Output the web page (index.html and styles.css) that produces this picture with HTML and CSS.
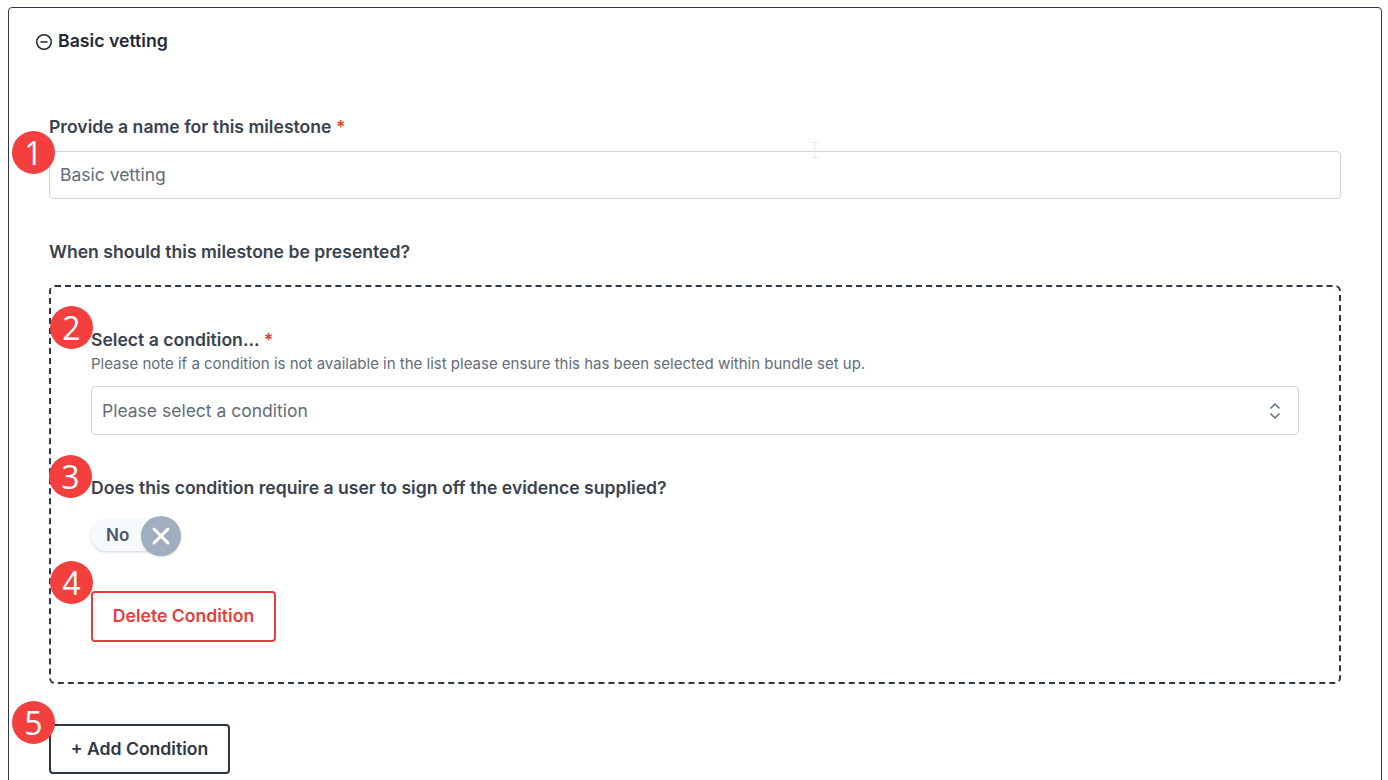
FILE: index.html
```html
<!DOCTYPE html>
<html lang="en">
<head>
    <meta charset="UTF-8">
    <title>Milestone</title>
    <link rel="stylesheet" href="styles.css">
</head>
<body>
    <div class="card">
        <div class="card-header">
            <svg class="toggle-icon" width="18" height="18" viewBox="0 0 18 18" fill="none" stroke="#1f2937" stroke-width="1.5" stroke-linecap="round">
                <circle cx="9" cy="9" r="7.25"/>
                <path d="M6 9h6"/>
            </svg>
            <span>Basic vetting</span>
        </div>

        <section class="field name-field">
            <span class="badge badge-1">1</span>
            <label class="label">Provide a name for this milestone <span class="req">*</span></label>
            <div class="input">Basic vetting</div>
            <svg class="ibeam" width="8" height="16" viewBox="0 0 8 16" fill="none" stroke="#e5e7eb" stroke-width="1">
                <path d="M1 .5h6M1 15.5h6M4 .5v15"/>
            </svg>
        </section>

        <h3 class="label when-label">When should this milestone be presented?</h3>

        <div class="condition-box">
            <section class="field">
                <span class="badge badge-2">2</span>
                <label class="label">Select a condition... <span class="req">*</span></label>
                <p class="help">Please note if a condition is not available in the list please ensure this has been selected within bundle set up.</p>
                <div class="input select">
                    <span>Please select a condition</span>
                    <svg width="12" height="18" viewBox="0 0 12 18" fill="none" stroke="#64748b" stroke-width="1.7" stroke-linecap="round" stroke-linejoin="round">
                        <path d="M2 6l4-4 4 4M2 12l4 4 4-4"/>
                    </svg>
                </div>
            </section>

            <section class="field signoff">
                <span class="badge badge-3">3</span>
                <label class="label">Does this condition require a user to sign off the evidence supplied?</label>
                <div class="switch">
                    <span class="switch-text">No</span>
                    <span class="switch-knob">
                        <svg width="20" height="20" viewBox="0 0 20 20" fill="none" stroke="#fff" stroke-width="3" stroke-linecap="round">
                            <path d="M3 3l14 14M17 3L3 17"/>
                        </svg>
                    </span>
                </div>
            </section>

            <section class="field delete-row">
                <span class="badge badge-4">4</span>
                <button class="btn btn-danger">Delete Condition</button>
            </section>
        </div>

        <section class="field add-row">
            <span class="badge badge-5">5</span>
            <button class="btn btn-dark">+ Add Condition</button>
        </section>
    </div>
</body>
</html>
```

FILE: styles.css
```css
html, body {
    height: 780px;
    overflow: hidden;
}

body {
    margin: 0;
    padding: 7px 6px 0 8px;
    background: #fff;
    font-family: Inter, "Noto Sans", sans-serif;
    color: #374151;
}

/* Card */
.card {
    border: 1px solid #2d3748;
    border-radius: 4px;
    padding: 0 40px 40px;
    height: 820px;
}

.card-header {
    display: flex;
    align-items: center;
    gap: 5px;
    margin-left: -14px;
    padding-top: 20px;
    height: 24px;
    font-size: 17.7px;
    font-weight: 600;
    color: #1f2937;
}

.toggle-icon {
    margin-top: 3px;
}

/* Form */
.field {
    position: relative;
}

.name-field {
    margin-top: 63px;
}

.label {
    display: block;
    margin: 0;
    font-size: 17.6px;
    line-height: 24px;
    font-weight: 600;
    color: #3a4250;
}

.req {
    color: #e8431f;
}

.input {
    display: flex;
    align-items: center;
    justify-content: space-between;
    box-sizing: border-box;
    height: 48px;
    margin-top: 12px;
    padding: 0 10px 2px;
    border: 1px solid #cbd5e0;
    border-radius: 4px;
    font-size: 17.5px;
    color: #626d7c;
}

.ibeam {
    position: absolute;
    left: 762px;
    top: 27px;
}

.when-label {
    margin-top: 41px;
}

.condition-box {
    box-sizing: border-box;
    height: 399px;
    margin-top: 21px;
    padding: 41px 40px 0;
    border: 2px dashed #2d3748;
    border-radius: 6px;
}

.help {
    margin: 2px 0 0;
    font-size: 15px;
    line-height: 20px;
    color: #626d7c;
}

.condition-box .input {
    height: 49px;
    margin-top: 12px;
    padding-bottom: 0;
}

.select svg {
    margin-right: 7px;
}

.signoff {
    margin-top: 41px;
}

/* Switch */
.switch {
    display: flex;
    align-items: center;
    position: relative;
    box-sizing: border-box;
    width: 80px;
    height: 31px;
    margin-top: 20px;
    padding: 0 0 1px 15px;
    border-radius: 16px;
    background: #f7fafc;
    box-shadow: 0 1px 3px rgba(0, 0, 0, 0.18);
}

.switch-text {
    font-size: 17px;
    font-weight: 600;
    color: #4a5568;
}

.switch-knob {
    position: absolute;
    right: -10px;
    top: -4px;
    display: flex;
    align-items: center;
    justify-content: center;
    width: 40px;
    height: 40px;
    border-radius: 50%;
    background: #a0aec0;
    box-shadow: 0 1px 2px rgba(0, 0, 0, 0.15);
}

/* Buttons */
.btn {
    display: block;
    box-sizing: border-box;
    height: 51px;
    background: #fff;
    border-radius: 4px;
    font-family: inherit;
    font-size: 17.6px;
    font-weight: 600;
}

.btn-danger {
    width: 185px;
    padding-bottom: 3px;
    border: 2px solid #e53e3e;
    color: #e53e3e;
}

.btn-dark {
    width: 181px;
    height: 50px;
    padding-bottom: 3px;
    border: 2px solid #2d3748;
    color: #2d3748;
}

.delete-row {
    margin-top: 40px;
}

.add-row {
    margin-top: 40px;
}

/* Numbered callouts */
.badge {
    position: absolute;
    display: flex;
    align-items: center;
    justify-content: center;
    width: 43px;
    height: 43px;
    border-radius: 50%;
    background: #f43f3f;
    color: #fff;
    font-family: "Open Sans", sans-serif;
    font-size: 32px;
    font-weight: 500;
    line-height: 1;
    z-index: 1;
}

.badge-1 {
    left: -37px;
    top: 16px;
}

.badge-2 {
    left: -41px;
    top: -22px;
}

.badge-3 {
    left: -42px;
    top: -21px;
}

.badge-4 {
    left: -41px;
    top: -30px;
}

.badge-5 {
    left: -37px;
    top: -23px;
}
```
